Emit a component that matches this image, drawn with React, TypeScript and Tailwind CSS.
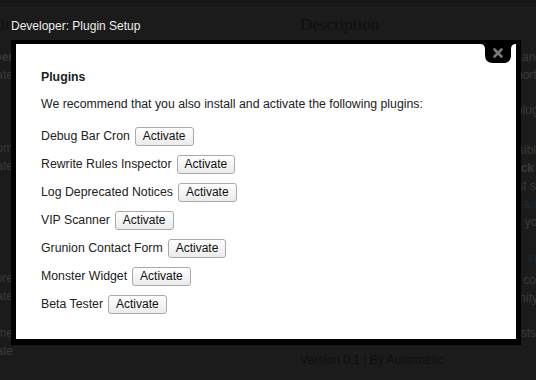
import React from "react";

const plugins = [
  "Debug Bar Cron",
  "Rewrite Rules Inspector",
  "Log Deprecated Notices",
  "VIP Scanner",
  "Grunion Contact Form",
  "Monster Widget",
  "Beta Tester",
];

const CloseTab = () => (
  <svg width="36" height="20" viewBox="0 0 36 20" className="absolute right-[5px] top-[4px]">
    <path d="M0 0 Q5 0 5 5 L5 11 Q5 19 13 19 L23 19 Q31 19 31 11 L31 5 Q31 0 36 0 Z" fill="#000" />
    <path d="M14.5 5.5 L21.5 12.5 M21.5 5.5 L14.5 12.5" stroke="#7a7a7a" strokeWidth="2.6" strokeLinecap="round" />
  </svg>
);

export default function App() {
  return (
    <div className="relative w-[536px] h-[380px] overflow-hidden bg-[#1b1b1b] font-['Liberation_Sans',Arial,sans-serif]">
      {/* Dimmed page below the overlay */}
      <div className="h-[8px] bg-[#171717] border-b border-[#202020]" />
      <div className="flex text-[12px] leading-[18px] text-[#3a3a3a]">
        <div className="w-[300px] -ml-[287px] flex flex-col items-end whitespace-nowrap text-right">
          <div className="mt-[8px] text-[#101010] text-[16px] font-['Liberation_Serif',serif]">Plugin</div>
          <div className="mt-[14px] font-bold">Developer</div>
          <div>Deactivate</div>
          <div className="mt-[55px]">Custom</div>
          <div>Activate</div>
          <div className="mt-[94px]">Widgets More</div>
          <div>Activate</div>
          <div className="mt-[19px]">Theme</div>
          <div>Activate</div>
        </div>
        <div className="ml-[287px] w-[236px] flex-1 flex flex-col whitespace-nowrap">
          <div className="mt-[7px] text-[#0f0f0f] text-[17px] leading-[20px] font-['Liberation_Serif',serif]">Description</div>
          <div className="mt-[13px] text-right -mr-[6px]">plugins and</div>
          <div className="text-right -mr-[10px]">support, i</div>
          <div className="mt-[17px] text-right -mr-[12px]">plugin</div>
          <div className="mt-[22px] text-right -mr-[6px]">possibly</div>
          <div className="text-right -mr-[8px] font-bold">check c</div>
          <div className="text-right -mr-[10px]">just sta</div>
          <div className="text-right -mr-[14px] text-[#1f2733]">and t</div>
          <div className="text-right -mr-[12px]">your</div>
          <div className="mt-[18px] text-right -mr-[10px] text-[#1f2733]">in s</div>
          <div className="mt-[4px] text-right -mr-[10px]">com</div>
          <div className="text-right -mr-[2px]">unity</div>
          <div className="mt-[17px] text-right">tests</div>
          <div className="mt-[9px] text-[#0f0f0f]">Version 0.1 | By Automattic</div>
        </div>
      </div>

      {/* Modal */}
      <div className="absolute left-[11px] top-[17px] flex flex-col">
        <div className="h-[18px] leading-[18px] mb-[5px] text-[12px] text-[#eeeeee]">Developer: Plugin Setup</div>
        <div className="relative w-[510px] h-[305px] bg-black pt-[4px] pl-[5px] pr-[5px] pb-[6px]">
          <div className="h-full bg-white pl-[25px] pt-[24px] text-[12.3px] leading-[18px] text-[#222]">
            <div className="font-bold">Plugins</div>
            <p className="mt-[9px]">We recommend that you also install and activate the following plugins:</p>
            <ul className="mt-[9px]">
              {plugins.map((name) => (
                <li key={name} className="h-[28px] flex items-center">
                  <span>{name}</span>
                  <button className="ml-[5px] h-[19px] px-[7px] rounded-[3px] border border-[#a9a9a9] bg-gradient-to-b from-white to-[#ebebeb] text-[12px] leading-none text-[#111]">
                    Activate
                  </button>
                </li>
              ))}
            </ul>
          </div>
          <CloseTab />
        </div>
      </div>
    </div>
  );
}
